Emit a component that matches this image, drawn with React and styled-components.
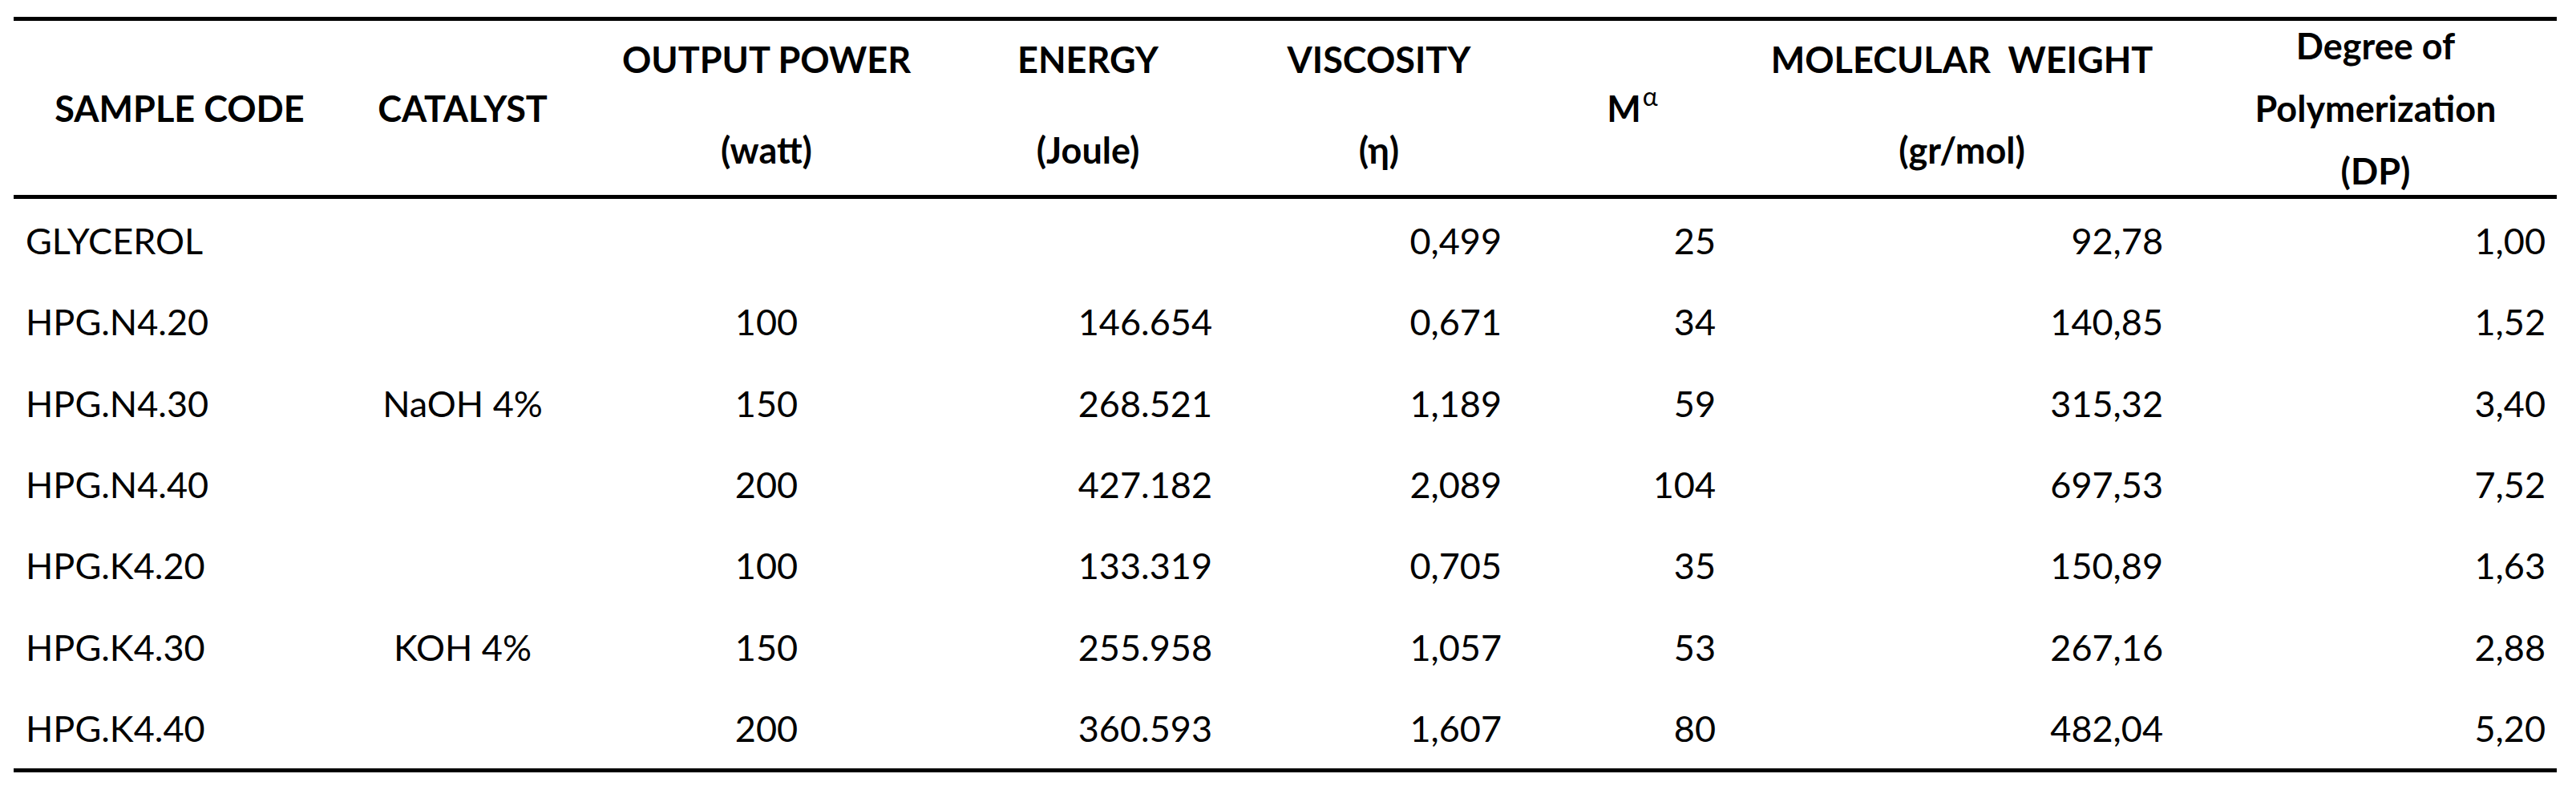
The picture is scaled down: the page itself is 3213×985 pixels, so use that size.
import React from 'react';
import styled, { createGlobalStyle } from 'styled-components';

const GlobalStyle = createGlobalStyle`
  html, body { margin: 0; padding: 0; background: #fff; }
  body { font-family: Lato, Carlito, "Liberation Sans", sans-serif; color: #000; }
`;

const Page = styled.div`
  padding: 21px 0 0 17px;
`;

const Table = styled.table`
  width: 3172px;
  table-layout: fixed;
  border-collapse: separate;
  border-spacing: 0;
  border-top: 5px solid #000;
  border-bottom: 5px solid #000;
  font-size: 45px;
`;

const Th = styled.th`
  height: 217px;
  padding: 0;
  border-bottom: 5px solid #000;
  font-weight: 700;
  text-align: center;
  vertical-align: middle;
  white-space: nowrap;
`;

const HeadLines = styled.div`
  display: flex;
  flex-direction: column;
  align-items: center;
  gap: ${p => p.$gap}px;
  margin-bottom: ${p => p.$lift || 0}px;
`;

const Line = styled.span`
  display: block;
  line-height: 54px;
  white-space: pre;
`;

const Sup = styled.sup`
  font-size: 32px;
  font-weight: 400;
  vertical-align: 20px;
  line-height: 0;
  margin-left: 2px;
`;

const Tr = styled.tr`
  height: 101.43px;
`;

const Td = styled.td`
  padding: 2px ${p => p.$pr || 0}px 0 ${p => p.$pl || 0}px;
  text-align: ${p => p.$align || 'right'};
  vertical-align: middle;
  white-space: nowrap;
  line-height: 54px;
`;

const columns = [414, 292, 466, 336, 390, 242, 580, 452];

const rows = [
  { code: 'GLYCEROL', power: '', energy: '', visc: '0,499', m: '25', mw: '92,78', dp: '1,00' },
  { code: 'HPG.N4.20', cat: { text: 'NaOH 4%', span: 3 }, power: '100', energy: '146.654', visc: '0,671', m: '34', mw: '140,85', dp: '1,52' },
  { code: 'HPG.N4.30', power: '150', energy: '268.521', visc: '1,189', m: '59', mw: '315,32', dp: '3,40' },
  { code: 'HPG.N4.40', power: '200', energy: '427.182', visc: '2,089', m: '104', mw: '697,53', dp: '7,52' },
  { code: 'HPG.K4.20', cat: { text: 'KOH 4%', span: 3 }, power: '100', energy: '133.319', visc: '0,705', m: '35', mw: '150,89', dp: '1,63' },
  { code: 'HPG.K4.30', power: '150', energy: '255.958', visc: '1,057', m: '53', mw: '267,16', dp: '2,88' },
  { code: 'HPG.K4.40', power: '200', energy: '360.593', visc: '1,607', m: '80', mw: '482,04', dp: '5,20' },
];

export default function App() {
  return (
    <Page>
      <GlobalStyle />
      <Table>
        <colgroup>
          {columns.map((w, i) => <col key={i} style={{ width: w }} />)}
        </colgroup>
        <thead>
          <tr>
            <Th><Line>SAMPLE CODE</Line></Th>
            <Th><Line>CATALYST</Line></Th>
            <Th>
              <HeadLines $gap={59} $lift={8}>
                <Line>OUTPUT POWER</Line>
                <Line>(watt)</Line>
              </HeadLines>
            </Th>
            <Th>
              <HeadLines $gap={59} $lift={8}>
                <Line>ENERGY</Line>
                <Line>(Joule)</Line>
              </HeadLines>
            </Th>
            <Th>
              <HeadLines $gap={59} $lift={8}>
                <Line>VISCOSITY</Line>
                <Line>(η)</Line>
              </HeadLines>
            </Th>
            <Th><Line>M<Sup>α</Sup></Line></Th>
            <Th>
              <HeadLines $gap={59} $lift={8}>
                <Line>MOLECULAR  WEIGHT</Line>
                <Line>(gr/mol)</Line>
              </HeadLines>
            </Th>
            <Th>
              <HeadLines $gap={24}>
                <Line>Degree of</Line>
                <Line>Polymerization</Line>
                <Line>(DP)</Line>
              </HeadLines>
            </Th>
          </tr>
        </thead>
        <tbody>
          {rows.map((r, i) => (
            <Tr key={r.code}>
              <Td $align="left" $pl={15}>{r.code}</Td>
              {i === 0 && <Td $align="center" />}
              {r.cat && <Td $align="center" rowSpan={r.cat.span}>{r.cat.text}</Td>}
              <Td $align="center">{r.power}</Td>
              <Td $pr={13}>{r.energy}</Td>
              <Td $pr={42}>{r.visc}</Td>
              <Td $pr={17}>{r.m}</Td>
              <Td $pr={39}>{r.mw}</Td>
              <Td $pr={14}>{r.dp}</Td>
            </Tr>
          ))}
        </tbody>
      </Table>
    </Page>
  );
}
